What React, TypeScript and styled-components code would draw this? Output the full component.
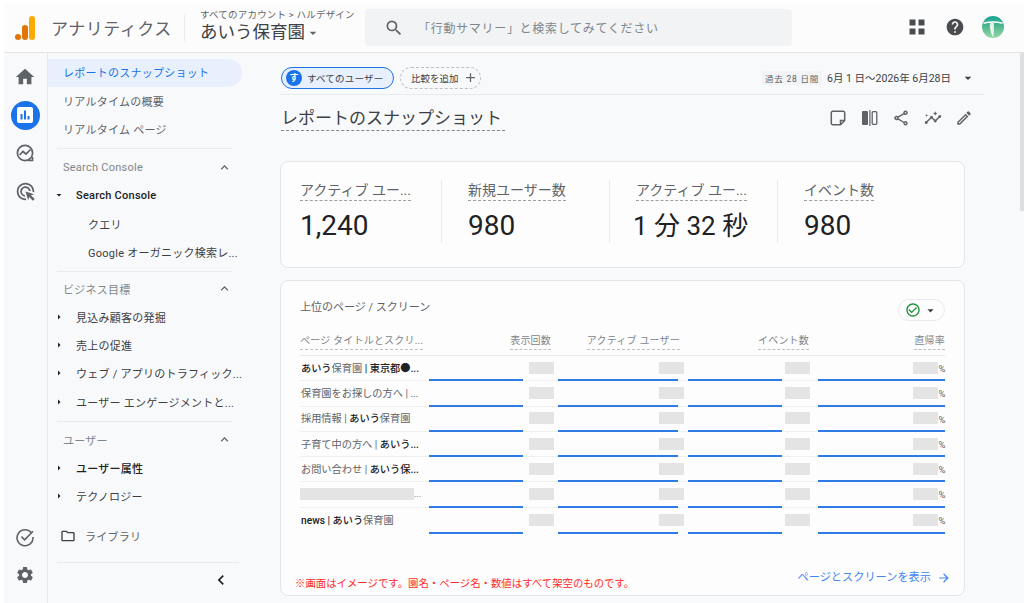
import styled, { createGlobalStyle } from 'styled-components'
import {
  MdHome,
  MdSettings,
  MdHelp,
  MdSearch,
  MdOutlineFolder,
  MdExpandLess,
  MdChevronLeft,
  MdArrowForward,
  MdOutlineShare,
  MdOutlineEdit,
  MdArrowDropDown,
  MdArrowRight,
  MdOutlineInsights,
  MdOutlineAdsClick,
  MdAdd,
  MdCheckCircleOutline,
} from 'react-icons/md'

type Segment = { text: string; strong?: boolean }

const rows: { title: Segment[]; hidden?: boolean }[] = [
  { title: [{ text: 'あいう', strong: true }, { text: '保育園' }, { text: ' | 東京都●...', strong: true }] },
  { title: [{ text: '保育園をお探しの方へ | ...' }] },
  { title: [{ text: '採用情報 | ' }, { text: 'あいう', strong: true }, { text: '保育園' }] },
  { title: [{ text: '子育て中の方へ | ' }, { text: 'あいう...', strong: true }] },
  { title: [{ text: 'お問い合わせ | ' }, { text: 'あいう保...', strong: true }] },
  { title: [], hidden: true },
  { title: [{ text: 'news | あいう', strong: true }, { text: '保育園' }] },
]

const metrics = [
  { label: 'アクティブ ユー...', value: '1,240', width: 141 },
  { label: '新規ユーザー数', value: '980', width: 168 },
  { label: 'アクティブ ユー...', value: '1 分 32 秒', width: 168, tight: true },
  { label: 'イベント数', value: '980', width: 150 },
]

const columns = [
  { inset: 4, bar: 94 },
  { inset: 4, bar: 120 },
  { inset: 8, bar: 94 },
  { inset: 7, bar: 127, percent: true },
]

const App = () => {
  return (
    <>
      <GlobalStyle />
      <Page>
        <Header>
          <LogoArea>
            <svg width="22" height="26" viewBox="0 0 22 26">
              <rect x="15" y="1" width="6" height="24" rx="3" fill="#f9ab00" />
              <rect x="8" y="10" width="6" height="15" rx="3" fill="#e37400" />
              <circle cx="4" cy="22" r="3" fill="#e37400" />
            </svg>
            <ProductName>アナリティクス</ProductName>
          </LogoArea>
          <Account>
            <Crumb>すべてのアカウント &gt; ハルデザイン</Crumb>
            <Property>
              あいう保育園
              <MdArrowDropDown size={16} />
            </Property>
          </Account>
          <SearchBox>
            <MdSearch size={20} />
            <span>「行動サマリー」と検索してみてください</span>
          </SearchBox>
          <HeaderIcons>
            <HeaderIconCell>
              <svg width="16" height="16" viewBox="0 0 16 16" fill="#4a4d50">
                <rect x="0.5" y="0.5" width="6" height="6" />
                <rect x="9.5" y="0.5" width="6" height="6" />
                <rect x="0.5" y="9.5" width="6" height="6" />
                <rect x="9.5" y="9.5" width="6" height="6" />
              </svg>
            </HeaderIconCell>
            <HeaderIconCell>
              <MdHelp size={20} color="#4a4d50" />
            </HeaderIconCell>
            <HeaderIconCell>
              <svg width="22" height="22" viewBox="0 0 22 22">
                <defs>
                  <linearGradient id="avatarFill" x1="0" y1="0" x2="0" y2="1">
                    <stop offset="0" stopColor="#18a596" />
                    <stop offset="0.35" stopColor="#3fb08c" />
                    <stop offset="1" stopColor="#9ad6a4" />
                  </linearGradient>
                </defs>
                <circle cx="11" cy="11" r="11" fill="url(#avatarFill)" />
                <path d="M1.5 7.2c6-1.6 13-1.6 19 0" stroke="#fff" strokeWidth="1.5" fill="none" />
                <path d="M11.8 6.8c.2 5 .2 9.5-.6 14.6-2.4-3.6-3.6-8.6-3.4-14.2z" fill="#fff" opacity="0.85" />
              </svg>
            </HeaderIconCell>
          </HeaderIcons>
        </Header>
        <Body>
          <Rail>
            <RailGroup>
              <RailItem>
                <MdHome size={22} />
              </RailItem>
              <RailItem>
                <ActiveCircle>
                  <svg width="16" height="16" viewBox="0 0 16 16">
                    <rect width="16" height="16" rx="2" fill="#fff" />
                    <path d="M3.5 7h2v5.5h-2zM7 3.5h2v9H7zM10.5 9h2v3.5h-2z" fill="#1a73e8" />
                  </svg>
                </ActiveCircle>
              </RailItem>
              <RailItem>
                <svg width="20" height="20" viewBox="0 0 20 20" fill="none" stroke="#5f6368" strokeWidth="1.7">
                  <circle cx="10" cy="10" r="7.6" />
                  <path d="M4.5 12l3.5-3.5 3 2.5 4.5-4.5" />
                  <path d="M13 17.5h4.5V14" />
                </svg>
              </RailItem>
              <RailItem>
                <MdOutlineAdsClick size={21} />
              </RailItem>
            </RailGroup>
            <RailGroup>
              <RailItem>
                <svg width="20" height="20" viewBox="0 0 20 20" fill="none" stroke="#5f6368" strokeWidth="1.6">
                  <path d="M16.6 6.2A8 8 0 1 0 18 10" />
                  <path d="M6.4 9.6l3.2 3.2 8.4-8.6" />
                </svg>
              </RailItem>
              <RailItem>
                <MdSettings size={20} />
              </RailItem>
            </RailGroup>
          </Rail>
          <Nav>
            <NavActive>レポートのスナップショット</NavActive>
            <NavLink>リアルタイムの概要</NavLink>
            <NavLink>リアルタイム ページ</NavLink>
            <NavDivider />
            <SectionHead>
              Search Console
              <MdExpandLess size={15} />
            </SectionHead>
            <TreeItem $strong>
              <MdArrowDropDown size={12} />
              Search Console
            </TreeItem>
            <SubItem>クエリ</SubItem>
            <SubItem>Google オーガニック検索レ...</SubItem>
            <NavDivider $after={3} />
            <SectionHead>
              ビジネス目標
              <MdExpandLess size={15} />
            </SectionHead>
            <TreeItem>
              <MdArrowRight size={12} />
              見込み顧客の発掘
            </TreeItem>
            <TreeItem>
              <MdArrowRight size={12} />
              売上の促進
            </TreeItem>
            <TreeItem>
              <MdArrowRight size={12} />
              ウェブ / アプリのトラフィック...
            </TreeItem>
            <TreeItem>
              <MdArrowRight size={12} />
              ユーザー エンゲージメントと...
            </TreeItem>
            <NavDivider />
            <SectionHead>
              ユーザー
              <MdExpandLess size={15} />
            </SectionHead>
            <TreeItem $strong>
              <MdArrowRight size={12} />
              ユーザー属性
            </TreeItem>
            <TreeItem>
              <MdArrowRight size={12} />
              テクノロジー
            </TreeItem>
            <Library>
              <MdOutlineFolder size={16} color="#3c4043" />
              ライブラリ
            </Library>
            <NavFooter>
              <MdChevronLeft size={20} color="#202124" />
            </NavFooter>
          </Nav>
          <Main>
            <FilterRow>
              <UserChip>
                <ChipBadge>す</ChipBadge>
                すべてのユーザー
              </UserChip>
              <CompareChip>
                比較を追加
                <MdAdd size={15} color="#5f6368" />
              </CompareChip>
              <DateArea>
                <DateTag>過去 28 日間</DateTag>
                <DateText>6月 1 日～2026年 6月28日</DateText>
                <MdArrowDropDown size={16} color="#3c4043" />
              </DateArea>
            </FilterRow>
            <TitleRow>
              <PageTitle>レポートのスナップショット</PageTitle>
              <TitleIcons>
                <svg width="18" height="18" viewBox="0 0 18 18" fill="none" stroke="#5f6368" strokeWidth="1.5">
                  <path d="M11.5 15.7H3.8a1.5 1.5 0 0 1-1.5-1.5V3.8a1.5 1.5 0 0 1 1.5-1.5h10.4a1.5 1.5 0 0 1 1.5 1.5v7.7z" />
                  <path d="M11.5 15.7v-4.2h4.2" />
                </svg>
                <svg width="18" height="18" viewBox="0 0 18 18" fill="#5f6368">
                  <rect x="1" y="2" width="6" height="14" rx="1" />
                  <rect x="8.3" y="1" width="1.2" height="16" />
                  <rect x="11.2" y="2.7" width="4.6" height="12.6" rx="1" fill="none" stroke="#5f6368" strokeWidth="1.3" />
                </svg>
                <MdOutlineShare size={18} />
                <MdOutlineInsights size={18} />
                <MdOutlineEdit size={18} />
              </TitleIcons>
            </TitleRow>
            <MetricCard>
              {metrics.map((m, i) => (
                <Metric key={i} $width={m.width} $first={i === 0}>
                  <MetricLabel>{m.label}</MetricLabel>
                  <MetricValue $tight={m.tight}>{m.value}</MetricValue>
                </Metric>
              ))}
            </MetricCard>
            <TableCard>
              <TableTop>
                <TableTitle>上位のページ / スクリーン</TableTitle>
                <StatusPill>
                  <MdCheckCircleOutline size={16} color="#1e8e3e" />
                  <MdArrowDropDown size={15} color="#3c4043" />
                </StatusPill>
              </TableTop>
              <HeadRow>
                <HeadCell>
                  <HeadLabel>ページ タイトルとスクリ...</HeadLabel>
                </HeadCell>
                <HeadCell $right $inset={7}>
                  <HeadLabel>表示回数</HeadLabel>
                </HeadCell>
                <HeadCell $right $inset={8}>
                  <HeadLabel>アクティブ ユーザー</HeadLabel>
                </HeadCell>
                <HeadCell $right $inset={9}>
                  <HeadLabel>イベント数</HeadLabel>
                </HeadCell>
                <HeadCell $right>
                  <HeadLabel>直帰率</HeadLabel>
                </HeadCell>
              </HeadRow>
              {rows.map((row, i) => (
                <DataRow key={i} $last={i === rows.length - 1}>
                  <TitleCell>
                    {row.hidden ? (
                      <>
                        <HiddenTitle $width={115} />
                        <Ellipsis>...</Ellipsis>
                      </>
                    ) : (
                      row.title.map((s, j) => (
                        <TitlePart key={j} $strong={s.strong}>
                          {s.text}
                        </TitlePart>
                      ))
                    )}
                  </TitleCell>
                  {columns.map((c, j) => (
                    <ValueCell key={j}>
                      <ValueLine $inset={c.inset}>
                        <Redacted $width={25} />
                        {c.percent && <Percent>%</Percent>}
                      </ValueLine>
                      <Bar style={{ width: c.bar }} />
                    </ValueCell>
                  ))}
                </DataRow>
              ))}
              <CardFooter>
                <Note>※画面はイメージです。園名・ページ名・数値はすべて架空のものです。</Note>
                <ViewLink>
                  ページとスクリーンを表示
                  <MdArrowForward size={14} />
                </ViewLink>
              </CardFooter>
            </TableCard>
          </Main>
        </Body>
        <ScrollThumb />
      </Page>
    </>
  )
}

export default App

const GlobalStyle = createGlobalStyle`
  html, body {
    margin: 0;
    padding: 0;
    background: #fff;
    overflow: hidden;
  }
  * {
    box-sizing: border-box;
  }
`
const Page = styled.div`
  position: relative;
  width: 1024px;
  height: 603px;
  padding: 3px 0 0 4px;
  overflow: hidden;
  background: #fff;
  font-family: Roboto, 'Noto Sans CJK JP', sans-serif;
  color: #3c4043;
`
const Header = styled.header`
  display: flex;
  align-items: center;
  height: 50px;
  background: #fcfcfd;
  border-bottom: 1px solid #e3e4e6;
`
const LogoArea = styled.div`
  display: flex;
  align-items: center;
  width: 181px;
  height: 26px;
  padding-left: 10px;
  gap: 15px;
  border-right: 1px solid #e8eaed;
`
const ProductName = styled.span`
  font-size: 17px;
  letter-spacing: 0.5px;
  color: #5f6368;
  white-space: nowrap;
`
const Account = styled.div`
  width: 165px;
  margin-left: 15px;
  display: flex;
  flex-direction: column;
`
const Crumb = styled.div`
  font-size: 9.5px;
  letter-spacing: 0.2px;
  line-height: 13px;
  color: #5f6368;
  white-space: nowrap;
  margin-top: -3px;
`
const Property = styled.div`
  display: flex;
  align-items: center;
  font-size: 17.5px;
  line-height: 23px;
  color: #3c4043;
  svg {
    color: #5f6368;
  }
`
const SearchBox = styled.div`
  display: flex;
  align-items: center;
  width: 427px;
  height: 37px;
  background: #f1f3f4;
  border-radius: 4px;
  padding-left: 19px;
  gap: 14px;
  font-size: 12px;
  color: #80868b;
  letter-spacing: 0.7px;
  svg {
    color: #5f6368;
  }
`
const HeaderIcons = styled.div`
  display: flex;
  align-items: center;
  margin: 0 0 1px 106px;
`
const HeaderIconCell = styled.div`
  width: 38px;
  display: flex;
  justify-content: center;
`
const Body = styled.div`
  display: flex;
  height: 550px;
  background: #f8f9fb;
`
const Rail = styled.aside`
  width: 44px;
  flex: none;
  display: flex;
  flex-direction: column;
  justify-content: space-between;
  border-right: 1px solid #e6e8ea;
  padding: 5px 0 9px;
  background: #f8f9fb;
`
const RailGroup = styled.div`
  display: flex;
  flex-direction: column;
`
const RailItem = styled.div`
  height: 38px;
  width: 42px;
  display: flex;
  align-items: center;
  justify-content: center;
  color: #5f6368;
`
const ActiveCircle = styled.div`
  width: 29px;
  height: 29px;
  border-radius: 50%;
  background: #1a73e8;
  display: flex;
  align-items: center;
  justify-content: center;
`
const Nav = styled.nav`
  width: 217px;
  flex: none;
  padding-top: 6px;
  font-size: 11px;
  letter-spacing: 0.25px;
`
const NavLink = styled.div`
  height: 28.2px;
  display: flex;
  align-items: center;
  padding-left: 15px;
  color: #5f6368;
  white-space: nowrap;
`
const NavActive = styled(NavLink)`
  width: 194px;
  height: 28px;
  padding-bottom: 2px;
  background: #e8f0fe;
  color: #1a73e8;
  border-radius: 0 14px 14px 0;
`
const NavDivider = styled.div<{ $after?: number }>`
  width: 175px;
  height: 1px;
  margin: 5px 0 ${(props) => props.$after ?? 4}px 9px;
  background: #e8eaed;
`
const SectionHead = styled.div`
  width: 184px;
  height: 28px;
  display: flex;
  align-items: center;
  justify-content: space-between;
  padding-left: 15px;
  color: #80868b;
  svg {
    color: #5f6368;
  }
`
const TreeItem = styled.div<{ $strong?: boolean }>`
  height: 28.2px;
  display: flex;
  align-items: center;
  padding-left: 5px;
  gap: 11px;
  color: ${(props) => (props.$strong ? '#202124' : '#3c4043')};
  font-weight: ${(props) => (props.$strong ? 500 : 400)};
  white-space: nowrap;
  svg {
    color: #202124;
  }
`
const SubItem = styled.div`
  height: 28.2px;
  display: flex;
  align-items: center;
  padding-left: 40px;
  color: #3c4043;
  white-space: nowrap;
`
const Library = styled.div`
  height: 28px;
  display: flex;
  align-items: center;
  gap: 9px;
  margin-top: 12px;
  padding-left: 12px;
  color: #5f6368;
`
const NavFooter = styled.div`
  width: 182px;
  height: 34px;
  margin: 12px 0 0 9px;
  border-top: 1px solid #e8eaed;
  display: flex;
  align-items: center;
  justify-content: flex-end;
  padding-right: 8px;
`
const Main = styled.main`
  width: 704px;
  margin-left: 15px;
  flex: none;
  display: flex;
  flex-direction: column;
`
const FilterRow = styled.div`
  height: 42px;
  display: flex;
  align-items: center;
  border-bottom: 1px solid #e8eaed;
  padding: 8px 0 0 1px;
`
const UserChip = styled.div`
  display: flex;
  align-items: center;
  gap: 5px;
  width: 113px;
  height: 22px;
  padding-left: 4px;
  border: 1px solid #1a73e8;
  border-radius: 11px;
  background: #e8f0fe;
  font-size: 9.5px;
  letter-spacing: 0.2px;
  color: #3c4043;
  white-space: nowrap;
`
const ChipBadge = styled.span`
  width: 16px;
  height: 16px;
  border-radius: 50%;
  background: #1a73e8;
  color: #fff;
  display: flex;
  align-items: center;
  justify-content: center;
  font-size: 9px;
  font-weight: 700;
`
const CompareChip = styled.div`
  display: flex;
  align-items: center;
  gap: 4px;
  height: 22px;
  width: 81px;
  margin-left: 6px;
  padding-left: 10px;
  border: 1px dashed #bdc1c6;
  border-radius: 11px;
  font-size: 9.5px;
  white-space: nowrap;
`
const DateArea = styled.div`
  margin-left: auto;
  margin-right: 8px;
  display: flex;
  align-items: center;
`
const DateTag = styled.span`
  font-size: 8.5px;
  letter-spacing: 0.8px;
  background: #f1f3f4;
  padding: 1px 3px;
  color: #5f6368;
  margin-right: 5px;
  white-space: nowrap;
`
const DateText = styled.span`
  font-size: 10.5px;
  margin-right: 9px;
  white-space: nowrap;
`
const TitleRow = styled.div`
  height: 66px;
  display: flex;
  justify-content: space-between;
  align-items: flex-start;
  padding: 11px 0 0 1px;
`
const PageTitle = styled.h1`
  margin: 0;
  font-size: 17px;
  font-weight: 400;
  line-height: 24px;
  width: 224px;
  white-space: nowrap;
  border-bottom: 1px dashed #80868b;
  color: #3c4043;
`
const TitleIcons = styled.div`
  width: 144px;
  margin-right: 11px;
  display: flex;
  justify-content: space-between;
  color: #5f6368;
  padding-top: 3px;
`
const Card = styled.section`
  width: 685px;
  background: #fdfdfd;
  border: 1px solid #e3e5e8;
  border-radius: 8px;
`
const MetricCard = styled(Card)`
  height: 107px;
  display: flex;
  align-items: flex-start;
  padding: 18px 0 0 19px;
`
const Metric = styled.div<{ $width: number; $first: boolean }>`
  width: ${(props) => props.$width}px;
  height: 63px;
  padding-left: ${(props) => (props.$first ? 0 : 26)}px;
  border-left: ${(props) => (props.$first ? 'none' : '1px solid #e8eaed')};
`
const MetricLabel = styled.div`
  display: inline-block;
  margin-top: -2px;
  font-size: 14px;
  line-height: 19px;
  color: #5f6368;
  border-bottom: 1px dashed #9aa0a6;
  white-space: nowrap;
`
const MetricValue = styled.div<{ $tight?: boolean }>`
  font-size: ${(props) => (props.$tight ? 26 : 28)}px;
  line-height: 38px;
  margin: 6px 0 0 ${(props) => (props.$tight ? -3 : 0)}px;
  color: #202124;
  white-space: nowrap;
`
const TableCard = styled(Card)`
  height: 316px;
  margin-top: 12px;
  padding: 0 19px;
  display: flex;
  flex-direction: column;
`
const TableTop = styled.div`
  height: 50px;
  display: flex;
  justify-content: space-between;
  align-items: flex-start;
`
const TableTitle = styled.div`
  font-size: 11px;
  line-height: 15px;
  margin-top: 19px;
  color: #5f6368;
`
const StatusPill = styled.div`
  margin-top: 18px;
  width: 47px;
  height: 22px;
  border: 1px solid #e8eaed;
  border-radius: 11px;
  display: flex;
  align-items: center;
  justify-content: center;
  gap: 2px;
`
const gridColumns = '129px 129px 130px 130px 127px'
const HeadRow = styled.div`
  display: grid;
  grid-template-columns: ${gridColumns};
  height: 25px;
  padding-top: 2px;
  border-bottom: 1px solid #e8eaed;
`
const HeadCell = styled.div<{ $right?: boolean; $inset?: number }>`
  display: flex;
  justify-content: ${(props) => (props.$right ? 'flex-end' : 'flex-start')};
  padding-right: ${(props) => props.$inset ?? 0}px;
`
const HeadLabel = styled.span`
  font-size: 10px;
  letter-spacing: 0.2px;
  line-height: 16px;
  height: 17px;
  color: #80868b;
  border-bottom: 1px dashed #bdc1c6;
  white-space: nowrap;
`
const DataRow = styled.div<{ $last: boolean }>`
  display: grid;
  grid-template-columns: ${gridColumns};
  height: 25.3px;
  border-bottom: ${(props) => (props.$last ? 'none' : '1px solid #eeeff1')};
`
const TitleCell = styled.div`
  display: flex;
  align-items: center;
  padding: 0 0 2px 1px;
  font-size: 10.2px;
  white-space: nowrap;
  overflow: hidden;
`
const TitlePart = styled.span<{ $strong?: boolean }>`
  color: ${(props) => (props.$strong ? '#202124' : '#5f6368')};
  font-weight: ${(props) => (props.$strong ? 500 : 400)};
  white-space: pre;
`
const Ellipsis = styled.span`
  color: #5f6368;
  font-size: 9px;
`
const ValueCell = styled.div`
  display: flex;
  flex-direction: column;
  justify-content: flex-end;
`
const ValueLine = styled.div<{ $inset: number }>`
  flex: 1;
  display: flex;
  justify-content: flex-end;
  align-items: center;
  padding-right: ${(props) => props.$inset}px;
  position: relative;
`
const Redacted = styled.div<{ $width: number }>`
  width: ${(props) => props.$width}px;
  height: 12px;
  background: #e4e4e4;
  flex: none;
`
const HiddenTitle = styled(Redacted)`
  margin-left: -2px;
`
const Percent = styled.span`
  position: absolute;
  right: 0;
  top: 7px;
  font-size: 9.5px;
  letter-spacing: -0.5px;
  color: #5f6368;
`
const Bar = styled.div`
  height: 2px;
  background: #2f7be6;
  margin-bottom: -1px;
`
const CardFooter = styled.div`
  margin-top: auto;
  height: 38px;
  margin-left: -5px;
  margin-right: -6px;
  display: flex;
  justify-content: space-between;
  align-items: flex-start;
`
const Note = styled.div`
  font-size: 10.4px;
  line-height: 14px;
  margin-top: 20px;
  color: #ff2b2b;
  white-space: nowrap;
`
const ViewLink = styled.div`
  display: flex;
  align-items: center;
  gap: 6px;
  margin-top: 13px;
  font-size: 11.2px;
  line-height: 16px;
  color: #4285f4;
  white-space: nowrap;
`
const ScrollThumb = styled.div`
  position: absolute;
  right: 0;
  top: 53px;
  width: 4px;
  height: 158px;
  background: #dcdee0;
`
